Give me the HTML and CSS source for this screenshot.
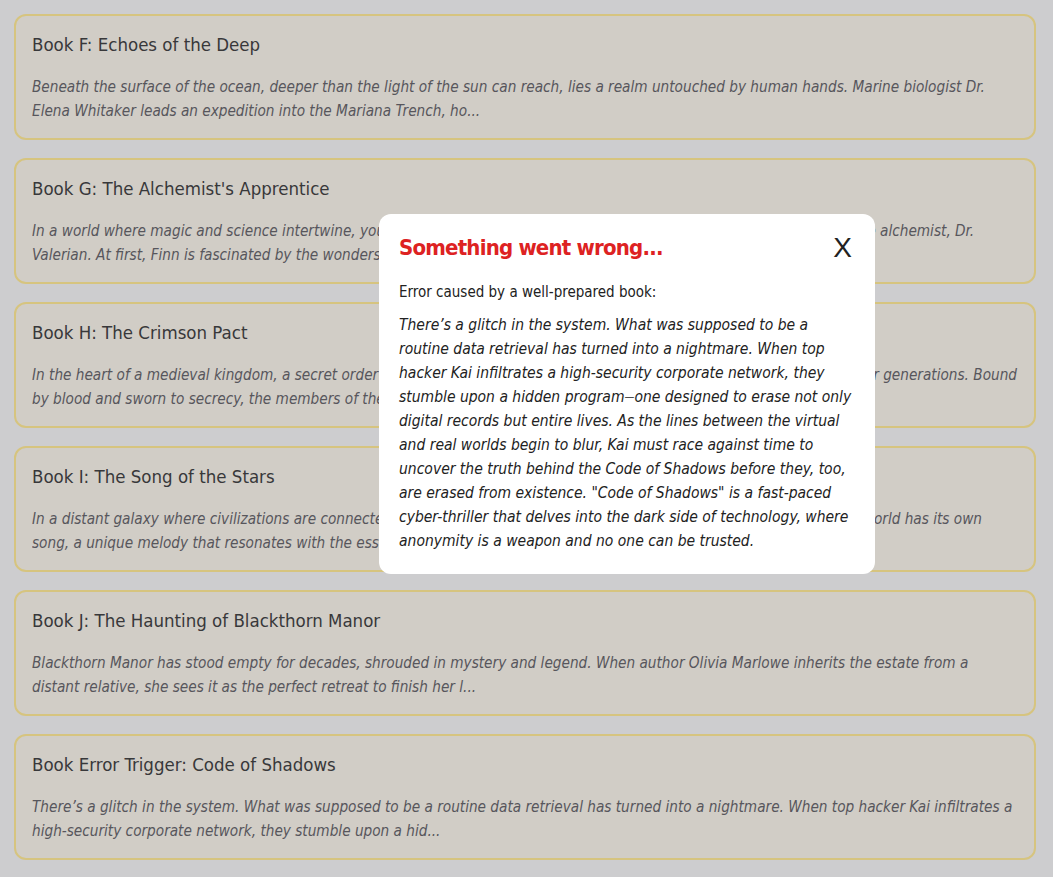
FILE: index.html
```html
<!DOCTYPE html>
<html>
<head>
<meta charset="utf-8">
<link rel="stylesheet" href="styles.css">
</head>
<body>
<div class="list">
  <div class="card">
    <div class="title">Book F: Echoes of the Deep</div>
    <div class="desc">Beneath the surface of the ocean, deeper than the light of the sun can reach, lies a realm untouched by human hands. Marine biologist Dr. Elena Whitaker leads an expedition into the Mariana Trench, ho...</div>
  </div>
  <div class="card">
    <div class="title">Book G: The Alchemist's Apprentice</div>
    <div class="desc">In a world where magic and science intertwine, young Finn Ashford becomes the apprentice of the enigmatic and reclusive alchemist, Dr. Valerian. At first, Finn is fascinated by the wonders of the laboratory, but soon he discovers a dark...</div>
  </div>
  <div class="card">
    <div class="title">Book H: The Crimson Pact</div>
    <div class="desc">In the heart of a medieval kingdom, a secret order known as the Crimson Pact has protected the realm from dark forces for generations. Bound by blood and sworn to secrecy, the members of the Pact face their greatest challenge yet whe...</div>
  </div>
  <div class="card">
    <div class="title">Book I: The Song of the Stars</div>
    <div class="desc">In a distant galaxy where civilizations are connected by the music of the cosmos, a young musician discovers that every world has its own song, a unique melody that resonates with the essence of its people and its pl...</div>
  </div>
  <div class="card">
    <div class="title">Book J: The Haunting of Blackthorn Manor</div>
    <div class="desc">Blackthorn Manor has stood empty for decades, shrouded in mystery and legend. When author Olivia Marlowe inherits the estate from a distant relative, she sees it as the perfect retreat to finish her l...</div>
  </div>
  <div class="card">
    <div class="title">Book Error Trigger: Code of Shadows</div>
    <div class="desc">There’s a glitch in the system. What was supposed to be a routine data retrieval has turned into a nightmare. When top hacker Kai infiltrates a high-security corporate network, they stumble upon a hid...</div>
  </div>
</div>
<div class="modal">
  <div class="modal-head">
    <div class="modal-title">Something went wrong...</div>
    <div class="close">X</div>
  </div>
  <div class="modal-sub">Error caused by a well-prepared book:</div>
  <div class="modal-text">There’s a glitch in the system. What was supposed to be a routine data retrieval has turned into a nightmare. When top hacker Kai infiltrates a high-security corporate network, they stumble upon a hidden program<span class="dash">—</span>one designed to erase not only digital records but entire lives. As the lines between the virtual and real worlds begin to blur, Kai must race against time to uncover the truth behind the Code of Shadows before they, too, are erased from existence. "Code of Shadows" is a fast-paced cyber-thriller that delves into the dark side of technology, where anonymity is a weapon and no one can be trusted.</div>
</div>
</body>
</html>
```
FILE: styles.css
```css
html, body {
  margin: 0;
  padding: 0;
}
body {
  background: #cdcdcf;
  font-family: "DejaVu Sans", sans-serif;
  font-stretch: condensed;
  width: 1053px;
  height: 877px;
  overflow: hidden;
}
.list {
  display: flex;
  flex-direction: column;
  gap: 18px;
  padding: 14px 17px 14px 14px;
}
.card {
  box-sizing: border-box;
  height: 126px;
  background: #d1cdc6;
  border: 2px solid #d6c47f;
  border-radius: 12px;
  padding: 15px 16px 0 16px;
  overflow: hidden;
}
.title {
  font-size: 18.5px;
  line-height: 28px;
  color: #38383a;
}
.desc {
  margin-top: 16px;
  font-size: 15.2px;
  line-height: 24px;
  font-style: italic;
  color: #57565c;
  display: -webkit-box;
  -webkit-line-clamp: 2;
  -webkit-box-orient: vertical;
  overflow: hidden;
}
.modal {
  position: fixed;
  left: 379px;
  top: 214px;
  width: 456px;
  padding: 17px 20px 21px 20px;
  background: #ffffff;
  border-radius: 12px;
}
.modal-head {
  display: flex;
  justify-content: space-between;
  align-items: center;
}
.modal-title {
  color: #dd2222;
  font-size: 22px;
  letter-spacing: -0.8px;
  line-height: 34px;
  font-weight: bold;
}
.close {
  font-family: "Liberation Sans", sans-serif;
  font-size: 28px;
  line-height: 34px;
  color: #222;
  padding-right: 3px;
}
.modal-sub {
  margin-top: 16px;
  font-size: 15px;
  line-height: 22px;
  color: #222;
}
.modal-text {
  margin-top: 10px;
  font-size: 15.5px;
  line-height: 24px;
  font-style: italic;
  color: #222;
}
.dash {
  font-size: 11px;
  line-height: 0;
  vertical-align: 2px;
}
```
